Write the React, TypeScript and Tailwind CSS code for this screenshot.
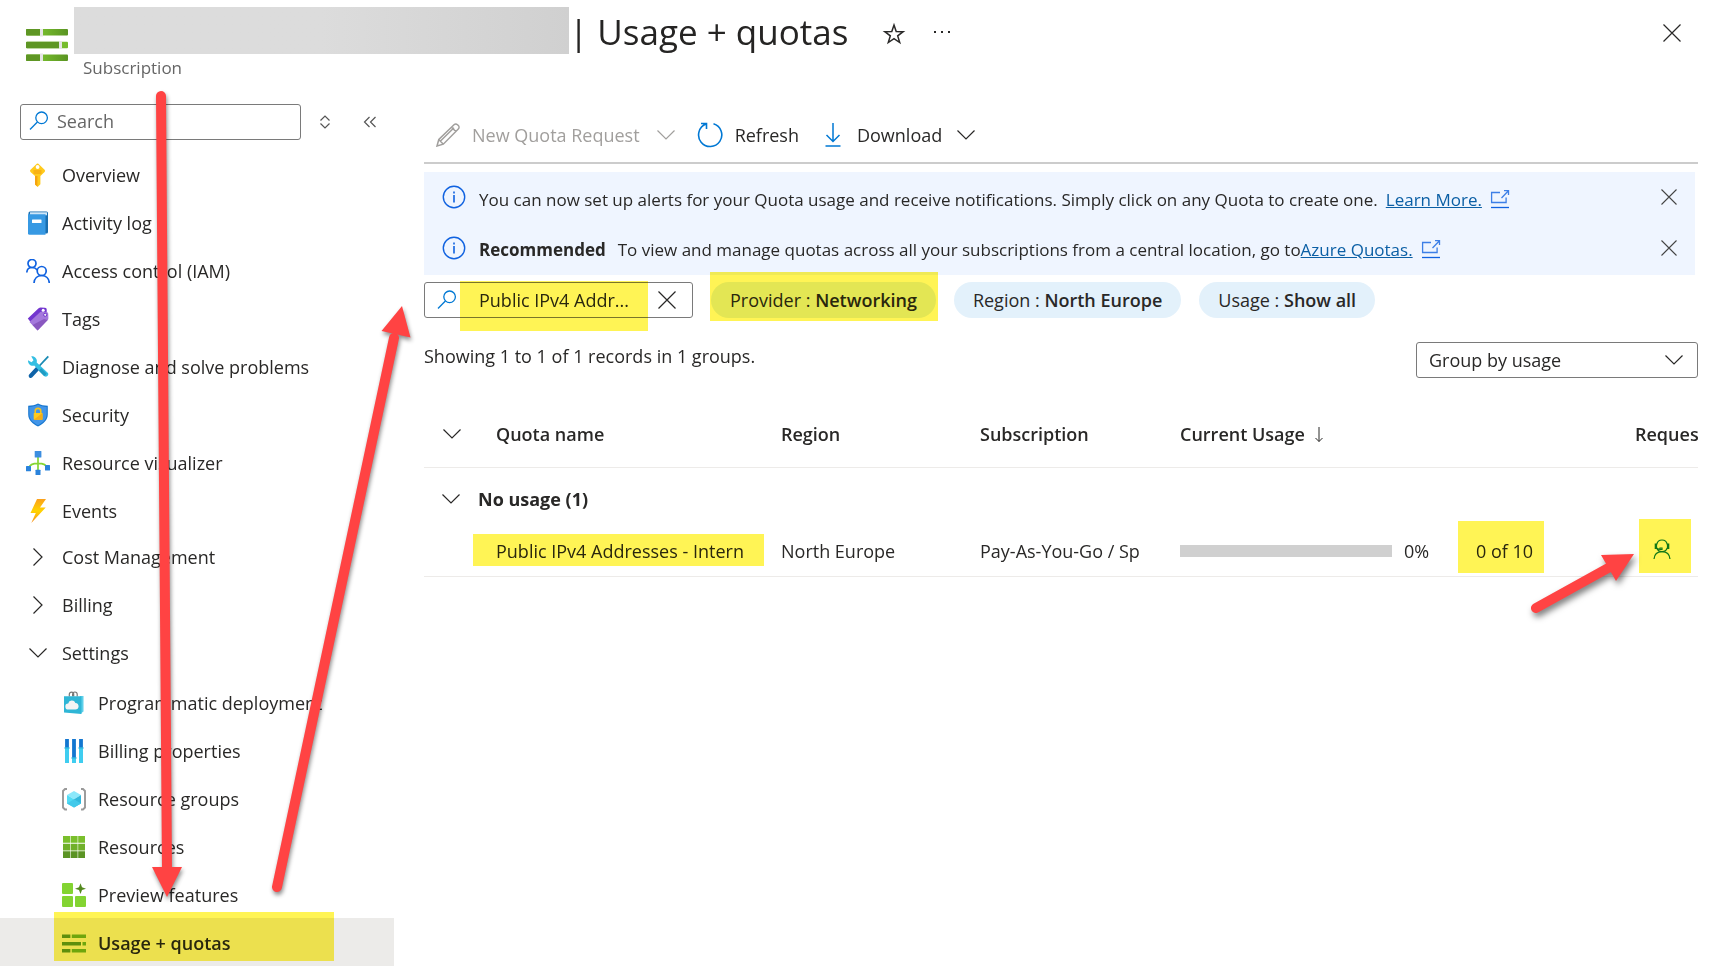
import { useState } from "react"
import type { ReactNode } from "react"

interface NavItem {
  label: string
  icon: ReactNode
  active?: boolean
}

function Chevron({ className = "", direction = "down" }: { className?: string; direction?: "down" | "right" }) {
  return (
    <svg viewBox="0 0 20 20" className={`w-5 h-5 shrink-0 ${className}`} fill="none" stroke="currentColor" strokeWidth="1.2">
      <path d={direction === "down" ? "M1.5 5.5L10 14l8.5-8.5" : "M5.5 1.5L14 10l-8.5 8.5"} />
    </svg>
  )
}

function CloseIcon() {
  return (
    <svg viewBox="0 0 20 20" className="w-5 h-5" fill="none" stroke="currentColor" strokeWidth="1.2">
      <path d="M1.5 1.5l17 17M18.5 1.5l-17 17" />
    </svg>
  )
}

function SmallCloseIcon() {
  return (
    <svg viewBox="0 0 20 20" className="w-5 h-5 text-[#444]" fill="none" stroke="currentColor" strokeWidth="1.1">
      <path d="M2.500 2.500l15 15M17.500 2.500l-15 15" />
    </svg>
  )
}

function SearchIcon() {
  return (
    <svg viewBox="0 0 20 20" className="w-5 h-5 shrink-0" fill="none" stroke="#0078d4" strokeWidth="1.3">
      <circle cx="12.6" cy="6.8" r="5.8" />
      <path d="M8.4 11L1 18.500" />
    </svg>
  )
}

function InfoIcon() {
  return (
    <svg viewBox="0 0 24 24" className="w-6 h-6 mb-[3px] shrink-0" fill="none" stroke="#1062e0" strokeWidth="1.4">
      <circle cx="12" cy="12" r="10.7" />
      <path d="M12 10v7.5M12 6.4v2" strokeWidth="1.6" />
    </svg>
  )
}

function ExternalIcon() {
  return (
    <svg viewBox="0 0 20 20" className="w-5 h-5 mb-0.5 shrink-0" fill="none" stroke="#1062e0" strokeWidth="1.3">
      <path d="M10 3.500H1.600v10h14.500V8.500M11.500 9L18 2.300M14 1.700h4.500V6" opacity="0.8" />
      <path d="M1 18.500h18" />
    </svg>
  )
}

function QuotaIcon({ className }: { className: string }) {
  return (
    <svg viewBox="0 0 42 32" className={className}>
      <defs>
        <linearGradient id="quotaGreen">
          <stop offset="0.35" stopColor="#76bc2d" />
          <stop offset="1" stopColor="#5a9422" />
        </linearGradient>
      </defs>
      <rect width="42" height="6.5" rx="1" fill="url(#quotaGreen)" />
      <rect width="15" height="6.5" rx="1" fill="#5e9624" />
      <rect x="14" y="-1" width="3" height="8.5" fill="#e4e4e4" />
      <rect y="12.7" width="42" height="6.5" rx="1" fill="#76bc2d" />
      <rect y="12.7" width="34" height="6.5" rx="1" fill="#5e9624" />
      <rect x="33" y="12" width="3" height="8" fill="#e4e4e4" />
      <rect y="25.4" width="42" height="6.5" rx="1" fill="url(#quotaGreen)" />
      <rect y="25.4" width="15" height="6.5" rx="1" fill="#5e9624" />
      <rect x="14" y="24.5" width="3" height="8.5" fill="#e4e4e4" />
    </svg>
  )
}

function SmallQuotaIcon() {
  return (
    <svg viewBox="0 0 24 24" className="w-6 h-6 shrink-0">
      <path d="M0 3.500h9V7H0zM0 11h19v3.500H0zM0 18h9v3.500H0z" fill="#5e9624" />
      <path d="M9.500 3.500H24V7H9.500zM20.500 11H24v3.500h-3.500zM9.500 18H24v3.500H9.500z" fill="#6fae25" />
      <path d="M8.400 3h1.100v4.500H8.400zM19 10.500h1v4.500h-1zM8.400 17.500h1.100V22H8.400z" fill="#f0f0e8" />
    </svg>
  )
}

function NavIcon({ children }: { children: ReactNode }) {
  return (
    <svg viewBox="0 0 24 24" className="w-6 h-6 shrink-0" fill="none">
      {children}
    </svg>
  )
}

const mainItems: NavItem[] = [
  {
    label: "Overview",
    icon: (
      <NavIcon>
        <path d="M10.8.7a1.5 1.5 0 0 1 1.6 0l6.2 6a1.6 1.6 0 0 1 0 2.2L14.4 13v8.3l-2.8 2.6-2.6-2.4V13L4.5 8.900a1.600 1.600 0 0 1 0-2.200z" fill="#ffca1c" />
        <path d="M9 13h2.400v10.600L9 21.500z" fill="#f5a30f" />
        <circle cx="11.600" cy="4" r="1.900" fill="#fff" />
        <path d="M7.500 8h8M7.500 10h8" stroke="#f29a0a" strokeWidth="1" />
      </NavIcon>
    ),
  },
  {
    label: "Activity log",
    icon: (
      <NavIcon>
        <rect x="2.500" y=".5" width="19.500" height="22" rx="1.500" fill="#1a6fb0" />
        <rect x="4" y="1.300" width="17" height="3" fill="#cfe6f8" />
        <path d="M2 3.300h17.500V23.700H3.500A1.500 1.500 0 0 1 2 22.200z" fill="#3799e3" />
        <rect x="6" y="8.500" width="9.500" height="3.500" rx=".5" fill="#fff" />
      </NavIcon>
    ),
  },
  {
    label: "Access control (IAM)",
    icon: (
      <NavIcon>
        <g stroke="#1062e0" strokeWidth="1.700">
          <circle cx="6" cy="4.500" r="4" />
          <circle cx="15.700" cy="12" r="4.500" />
          <path d="M.8 13.500C1 10.500 3 8.500 6 8.500c2.200 0 4 .8 5.300 2.500M8 24c.3-4.500 3.500-7.500 7.700-7.500s7.300 3 7.600 7.500" />
        </g>
      </NavIcon>
    ),
  },
  {
    label: "Tags",
    icon: (
      <NavIcon>
        <path d="M1.800 11.500L12.600 1.300c.6-.6 1.300-.8 2-.8L19 .8c1 .1 1.700.8 1.700 1.800v5.600L7 18z" fill="#7336cf" />
        <path d="M3.500 15L14 5.300c.5-.5 1.200-.7 1.900-.7l4.500.3c1 .1 1.700.8 1.800 1.700l.2 4.600c0 .7-.2 1.400-.7 1.900L11.600 23.500z" fill="#a478dc" />
        <path d="M6.500 18L18 12l3.700 1.100-10.100 10.400z" fill="#8a58c0" />
        <circle cx="17.200" cy="3.200" r="1.500" fill="#fff" />
        <circle cx="19.200" cy="7.800" r="1.600" fill="#eee" stroke="#7336cf" />
      </NavIcon>
    ),
  },
  {
    label: "Diagnose and solve problems",
    icon: (
      <NavIcon>
        <path d="M22.300 1.300l-9.500 10.200" stroke="#198ab3" strokeWidth="1.800" />
        <path d="M10.500 11.500l3 3-7.200 7.800c-.9.9-2.200.9-3 .1-.9-.9-.8-2.200.1-3.100z" fill="#0f63a8" />
        <path d="M5.200 1.300c2.700-.4 5.500 1.700 5.700 4.500l-.2 1.700 11 10.300c1.800 1.900-.8 5.200-3.200 3.500L8.200 10.500c-3 .9-6.400-1.200-6.200-5.300l3.500 2 2-1.900z" fill="#35bfe3" />
        <path d="M14 14.500l5.500 5.500" stroke="#1f9cc4" strokeWidth="3.500" />
      </NavIcon>
    ),
  },
  {
    label: "Security",
    icon: (
      <NavIcon>
        <path d="M12 .5c3 1.800 6 2 9.800 2.200v8.500c0 6-4.300 9.500-9.800 12.300C6.500 20.700 2.200 17.200 2.200 11.200V2.700C6 2.500 9 2.300 12 .5z" fill="#1877cf" />
        <path d="M12 1.800c2.800 1.500 5.500 1.900 8.700 2.100v7.300c0 5.200-3.700 8.300-8.700 11-5-2.700-8.700-5.800-8.700-11V3.900c3.200-.2 5.900-.6 8.700-2.100z" fill="#4295e8" />
        <path d="M9.200 10V8.200a2.800 2.800 0 0 1 5.600 0V10" stroke="#f7c21c" strokeWidth="1.600" />
        <rect x="7.700" y="10" width="8.800" height="6.800" rx=".7" fill="#ffca1c" />
        <path d="M7.700 16.800l8.800-6.800v6.800z" fill="#f5ad17" />
      </NavIcon>
    ),
  },
  {
    label: "Resource visualizer",
    icon: (
      <NavIcon>
        <path d="M12 6v13M3 17c.5-3 3-4.700 9-4.700s8.500 1.700 9 4.700" stroke="#86d633" strokeWidth="1.700" />
        <rect x="8.700" width="6.700" height="6.500" rx=".5" fill="#3c8ee0" />
        <rect y="15" width="5" height="5.300" rx=".5" fill="#2a83dc" />
        <rect x="19" y="14" width="5" height="5.500" rx=".5" fill="#2a83dc" />
        <rect x="9.500" y="18.700" width="5" height="5.300" rx=".5" fill="#2a83dc" />
      </NavIcon>
    ),
  },
  {
    label: "Events",
    icon: (
      <NavIcon>
        <defs>
          <linearGradient id="bolt" x1="0" y1="0" x2="0" y2="1">
            <stop offset="0" stopColor="#fba01c" />
            <stop offset="0.500" stopColor="#ffd400" />
            <stop offset="1" stopColor="#f78d1e" />
          </linearGradient>
        </defs>
        <path d="M11 0h9l-6 8.500h5.700L5.300 24l4.500-10H4.500z" fill="url(#bolt)" />
      </NavIcon>
    ),
  },
]

const settingsItems: NavItem[] = [
  {
    label: "Programmatic deployment",
    icon: (
      <NavIcon>
        <path d="M7.300 5.500V3.300a2.200 2.200 0 0 1 4.400 0v2.200M10.600 5.500V3.300a2.300 2.300 0 0 1 4.600 0v2.200" stroke="#777" strokeWidth="1.200" />
        <path d="M18 5h3.500v15.500L18 23z" fill="#5ed0ea" />
        <path d="M2 5.300h17.500V23L2 21.500z" fill="#2fb6d6" />
        <path d="M6.500 18.500a3 3 0 0 1-.3-6 3.800 3.800 0 0 1 7.200-.6c2.200.2 3.200 1.700 3.200 3.300 0 2-1.300 3.300-3.300 3.300z" fill="#f4f4f4" />
      </NavIcon>
    ),
  },
  {
    label: "Billing properties",
    icon: (
      <NavIcon>
        <path d="M5 0v9M12 0v19M19 0v9" stroke="#1377d0" strokeWidth="3.800" />
        <path d="M5 9v15M19 9v15M12 19v5" stroke="#3fcdf0" strokeWidth="4" />
        <path d="M2.500 9h5M16.500 9h5M9.500 19h5" stroke="#31b8e0" strokeWidth="1.600" />
      </NavIcon>
    ),
  },
  {
    label: "Resource groups",
    icon: (
      <NavIcon>
        <path d="M5 2H3L1 4v16.500l2 2h2M19 2h2l2 2v16.500l-2 2h-2" stroke="#999" strokeWidth="1.900" />
        <path d="M12 4l7 4-7 4.300L5 8z" fill="#8be8fb" />
        <path d="M5 8l7 4.300V20.500l-7-4z" fill="#50dcf5" />
        <path d="M19 8l-7 4.300v8.200l7-4z" fill="#32b8dc" />
        <path d="M5 16.500l7-4.200 7 4.200-7 4z" fill="#42c9ea" />
      </NavIcon>
    ),
  },
  {
    label: "Resources",
    icon: (
      <NavIcon>
        <path d="M1 1h7v6.700H1zM8.600 1h7v6.700h-7zM16.200 1H23v6.700h-6.800z" fill="#7abf2c" />
        <path d="M1 8.700h7v6.700H1zM8.600 8.700h7v6.700h-7zM16.200 8.700H23v6.700h-6.800z" fill="#70b02a" />
        <path d="M1 16.300h7V23H1zM8.600 16.300h7V23h-7zM16.200 16.300H23V23h-6.800z" fill="#5b9424" />
      </NavIcon>
    ),
  },
  {
    label: "Preview features",
    icon: (
      <NavIcon>
        <rect width="11" height="11" rx="1" fill="#83d432" />
        <rect y="13" width="11" height="11" rx="1" fill="#83d432" />
        <rect x="13" y="13" width="11" height="11" rx="1" fill="#83d432" />
        <path d="M18.500.3l1.500 4 4 1.400-4 1.400-1.500 4-1.500-4-4-1.400 4-1.400z" fill="#54891f" />
      </NavIcon>
    ),
  },
  { label: "Usage + quotas", icon: <SmallQuotaIcon />, active: true },
]

function Sidebar() {
  return (
    <aside className="w-[394px] shrink-0">
      <div className="flex items-center pl-5 text-[#555]">
        <label className="flex items-center gap-2 w-[281px] h-9 pl-2 pb-0.5 border border-[#7a7a7a] rounded-[3px]">
          <SearchIcon />
          <input type="text" aria-label="Search" placeholder="Search" className="min-w-0 flex-1 outline-none placeholder:text-[#666]" />
        </label>
        <button aria-label="Sort menu" className="ml-4">
          <svg viewBox="0 0 16 16" className="w-4 h-4" fill="none" stroke="currentColor" strokeWidth="1.200">
            <path d="M3.500 6.500L8 2l4.500 4.500M3.500 9.500L8 14l4.500-4.500" />
          </svg>
        </button>
        <button aria-label="Collapse menu" className="ml-7">
          <svg viewBox="0 0 18 16" className="w-[18px] h-4" fill="none" stroke="currentColor" strokeWidth="1.200">
            <path d="M8.500 3L3.500 8l5 5M14.500 3l-5 5 5 5" />
          </svg>
        </button>
      </div>

      <nav className="mt-[11px]">
        <ul>
          {mainItems.map((item) => (
            <li key={item.label}>
              <a href="#" className="flex items-center gap-3 h-12 pl-[26px]">
                {item.icon}
                {item.label}
              </a>
            </li>
          ))}
        </ul>
        <ul className="-mt-0.5 pb-px">
          {["Cost Management", "Billing", "Settings"].map((label) => (
            <li key={label}>
              <button className="flex items-center gap-3.5 w-full h-12 pl-7">
                <Chevron direction={label === "Settings" ? "down" : "right"} />
                {label}
              </button>
            </li>
          ))}
        </ul>
        <ul>
          {settingsItems.map((item) => (
            <li key={item.label}>
              <a
                href="#"
                className={`relative flex items-center gap-3 h-12 pl-[62px] pt-0.5 ${item.active ? "bg-[#ecebe9] font-semibold" : ""}`}
              >
                {item.icon}
                {item.label}
                {item.active && <Highlight className="left-[54px] -top-1.5 w-[280px] h-[49px]" />}
              </a>
            </li>
          ))}
        </ul>
      </nav>
    </aside>
  )
}

// Yellow marker laid over the thing it points out
function Highlight({ className }: { className: string }) {
  return <span aria-hidden="true" className={`absolute bg-[#fff455] mix-blend-multiply pointer-events-none ${className}`} />
}

function FilterPill({ name, value, marked }: { name: string; value: string; marked?: boolean }) {
  return (
    <button className="relative h-9 px-[19px] rounded-full bg-[#e3f1fb] whitespace-nowrap">
      {name} : <span className="font-semibold">{value}</span>
      {marked && <Highlight className="-left-px -right-0.5 -top-2.5 -bottom-[3px]" />}
    </button>
  )
}

function Toolbar() {
  return (
    <div className="flex items-center h-[60px] pl-3 pt-1 border-b-2 border-[#ccc]">
      <button disabled className="flex items-center text-[#a19f9d]">
        <svg viewBox="0 0 24 24" className="w-6 h-6 mr-3" fill="none" stroke="currentColor" strokeWidth="1.500">
          <path d="M1 23l1.800-6.500L18 1.700c1-.9 2.500-.9 3.500 0l.8.8c1 1 1 2.500 0 3.500L7.300 21.200zM15.500 4.200l4.300 4.300M2.800 16.500l4.500 4.700M4.500 18L18 4.800" />
        </svg>
        New Quota Request
        <Chevron className="ml-4" />
      </button>
      <button className="flex items-center ml-[21px]">
        <svg viewBox="0 0 26 26" className="w-[26px] h-[26px] mr-3" fill="none" stroke="#0078d4" strokeWidth="1.600">
          <path d="M16.500 1.800A11.600 11.600 0 1 1 9 2.100M4 1.500h5.500V7" />
        </svg>
        Refresh
      </button>
      <button className="flex items-center ml-[22px]">
        <svg viewBox="0 0 24 24" className="w-6 h-6 mr-3" fill="none" stroke="#0078d4" strokeWidth="1.500">
          <path d="M12 0v18.500M5.500 12l6.500 6.500 6.500-6.500M4.500 23h15" />
        </svg>
        Download
        <Chevron className="ml-3.5" />
      </button>
    </div>
  )
}

function Notices() {
  const [hidden, setHidden] = useState<number[]>([])

  return (
    <div className="mt-2 mr-[3px] bg-[#eff5ff] text-[17px]">
      {!hidden.includes(0) && (
        <div className="flex items-center h-[52px] pl-[18px] pr-4">
          <InfoIcon />
          <p className="flex items-center ml-[13px] pt-[3px]">
            You can now set up alerts for your Quota usage and receive notifications. Simply click on any Quota to create one.
            <a href="#" className="flex items-center gap-2 ml-2 text-[#0b5fa5]">
              <span className="underline">Learn More.</span>
              <ExternalIcon />
            </a>
          </p>
          <button aria-label="Dismiss alert notice" className="ml-auto mb-[3px]" onClick={() => setHidden([...hidden, 0])}>
            <SmallCloseIcon />
          </button>
        </div>
      )}
      {!hidden.includes(1) && (
        <div className="flex items-center h-[51px] pl-[18px] pr-4">
          <InfoIcon />
          <p className="flex items-center ml-[13px]">
            <strong className="mr-3 font-bold">Recommended</strong>
            To view and manage quotas across all your subscriptions from a central location, go to
            <a href="#" className="flex items-center gap-2 text-[#0b5fa5]">
              <span className="underline">Azure Quotas.</span>
              <ExternalIcon />
            </a>
          </p>
          <button aria-label="Dismiss recommendation" className="ml-auto mb-[3px]" onClick={() => setHidden([...hidden, 1])}>
            <SmallCloseIcon />
          </button>
        </div>
      )}
    </div>
  )
}

function Filters() {
  const [search, setSearch] = useState("Public IPv4 Addr...")

  return (
    <div className="flex items-center mt-[7px]">
      <div className="relative flex items-center w-[269px] h-9 pl-3 pr-[15px] border border-[#7a7a7a] rounded-[3px]">
        <SearchIcon />
        <input
          type="text"
          aria-label="Filter quotas"
          value={search}
          onChange={(e) => setSearch(e.target.value)}
          className="min-w-0 flex-1 ml-[22px] outline-none"
        />
        <button aria-label="Clear filter" onClick={() => setSearch("")}>
          <CloseIcon />
        </button>
        <Highlight className="left-[35px] -top-0.5 w-[188px] h-[50px]" />
      </div>
      <div className="flex gap-[18px] ml-[18px]">
        <FilterPill name="Provider" value="Networking" marked />
        <FilterPill name="Region" value="North Europe" />
        <FilterPill name="Usage" value="Show all" />
      </div>
    </div>
  )
}

function QuotaTable() {
  return (
    <table className="w-full mt-[21px] table-fixed text-left whitespace-nowrap">
      <colgroup>
        <col className="w-[72px]" />
        <col />
        <col className="w-[199px]" />
        <col className="w-[200px]" />
        <col className="w-[278px]" />
        <col className="w-[177px]" />
        <col className="w-[63px]" />
      </colgroup>
      <thead>
        <tr className="h-[68px] border-b border-[#edebe9] [&>th]:pt-0.5">
          <th className="pl-[18px]">
            <button aria-label="Collapse all groups" className="block">
              <Chevron />
            </button>
          </th>
          <th className="font-semibold">Quota name</th>
          <th className="font-semibold">Region</th>
          <th className="font-semibold">Subscription</th>
          <th className="font-semibold">
            <span className="flex items-center gap-2">
              Current Usage
              <svg viewBox="0 0 12 18" className="w-3 h-[18px]" fill="none" stroke="currentColor" strokeWidth="1">
                <path d="M6 2v14.500M2.500 13L6 16.500 9.500 13" />
              </svg>
            </span>
          </th>
          <th />
          <th className="font-semibold overflow-hidden">Reques</th>
        </tr>
      </thead>
      <tbody>
        <tr className="h-[60px]">
          <td colSpan={7} className="pl-[17px] pt-1">
            <button className="flex items-center gap-[17px] font-bold">
              <Chevron />
              No usage (1)
            </button>
          </td>
        </tr>
        <tr className="h-[49px] border-b border-[#edebe9]">
          <td />
          <td className="relative">
            Public IPv4 Addresses - Intern
            <Highlight className="-left-[23px] top-[7px] w-[291px] h-8" />
          </td>
          <td>North Europe</td>
          <td>Pay-As-You-Go / Sp</td>
          <td>
            <div className="flex items-center gap-3">
              <div role="progressbar" aria-label="Current usage" aria-valuenow={0} className="w-[212px] h-3 bg-[#d0d0d0]" />
              0%
            </div>
          </td>
          <td className="relative pl-[18px]">
            0 of 10
            <Highlight className="left-0 -top-1.5 w-[86px] h-[52px]" />
          </td>
          <td className="relative">
            <button aria-label="Request adjustment" className="block ml-[18px] mb-1">
              <svg viewBox="0 0 18 20" className="w-[18px] h-5" fill="none" stroke="#107c41" strokeWidth="1.200">
                <path d="M3.800 5.500C4.300 2.500 6.300 1 9 1s4.700 1.500 5.200 4.500" />
                <path d="M3.500 5H2.300v4.500h1.200zM14.500 5h1.200v4.500h-1.200z" />
                <path d="M3.800 9c.7 2.300 2.700 3.700 5.200 3.700s4.500-1.400 5.200-3.700M3.800 9C4.500 10 6 10.200 7.500 9.800M7 9h2v1.500H7z" />
                <path d="M1 20c.4-4.500 3.200-7.300 8-7.300s7.600 2.800 8 7.300" />
              </svg>
            </button>
            <Highlight className="left-1 -top-2 w-[52px] h-[54px]" />
            {/* Arrow pointing at the request button */}
            <svg
              aria-hidden="true"
              viewBox="0 0 110 72"
              className="absolute -left-[107px] top-[23px] w-[110px] h-[72px] drop-shadow-[2px_4px_3px_rgba(0,0,0,0.5)] pointer-events-none"
            >
              <path d="M8 58L82 17" stroke="#ff4343" strokeWidth="10" strokeLinecap="round" />
              <path d="M106 4L73 5l15 26z" fill="#ff4343" />
            </svg>
          </td>
        </tr>
      </tbody>
    </table>
  )
}

export default function App() {
  return (
    <div className="relative min-h-screen overflow-hidden bg-white text-[#292827] text-[18px] leading-6 font-['Open_Sans','Noto_Sans',sans-serif]">
      <header className="flex items-start pt-[7px] pb-6 pl-[26px] pr-[31px]">
        <QuotaIcon className="w-[42px] h-8 mt-[22px] shrink-0" />
        <div className="ml-1.5">
          <div className="flex items-start h-12">
            <div className="w-[495px] h-[47px] bg-linear-to-r from-[#dcdcdc] from-50% to-[#d0d0d0]" />
            <div className="flex items-center h-[50px]">
              <h1 className="text-[35px] leading-[50px] text-[#252423]">| Usage + quotas</h1>
              <button aria-label="Add to favorites" className="ml-[34px] pt-1">
                <svg viewBox="0 0 24 24" className="w-6 h-6" fill="none" stroke="currentColor" strokeWidth="1.500">
                  <path d="M12 3l2.200 6.500 7 .2-5.500 4.200 2 6.600-5.700-3.900-5.700 3.900 2-6.600-5.500-4.200 7-.2z" />
                </svg>
              </button>
              <button aria-label="More options" className="ml-[26px]">
                <svg viewBox="0 0 20 4" className="w-5 h-1" fill="currentColor">
                  <path d="M2 1h2v2H2zM9 1h2v2H9zM16 1h2v2h-2z" />
                </svg>
              </button>
            </div>
          </div>
          <p className="ml-[9px] pt-px text-[17px] text-[#666]">Subscription</p>
        </div>
        <button aria-label="Close" className="ml-auto mt-4">
          <CloseIcon />
        </button>
      </header>

      <div className="flex gap-[30px] pr-[15px]">
        <Sidebar />
        <main className="flex-1 min-w-0">
          <Toolbar />
          <Notices />
          <Filters />
          <div className="flex items-start justify-between mt-6">
            <p className="leading-7">Showing 1 to 1 of 1 records in 1 groups.</p>
            <div className="relative w-[282px]">
              <select aria-label="Group by" className="appearance-none w-full h-9 pl-3 border border-[#7a7a7a] rounded-[3px]">
                <option>Group by usage</option>
              </select>
              <Chevron className="absolute right-3.5 top-2 pointer-events-none" />
            </div>
          </div>
          <QuotaTable />
        </main>
      </div>

      {/* Walkthrough arrows: down to Usage + quotas, then up to the filter box */}
      <svg
        aria-hidden="true"
        viewBox="0 0 430 920"
        className="absolute left-0 top-0 w-[430px] h-[920px] drop-shadow-[1px_3px_2px_rgba(0,0,0,0.45)] pointer-events-none"
      >
        <g stroke="#ff4343" strokeWidth="10" strokeLinecap="round">
          <path d="M161 96L167 870" />
          <path d="M277 887L394 338" />
        </g>
        <path d="M152 867h30l-15 30zM402 306l-20.500 25 29 6.500z" fill="#ff4343" />
      </svg>
    </div>
  )
}
